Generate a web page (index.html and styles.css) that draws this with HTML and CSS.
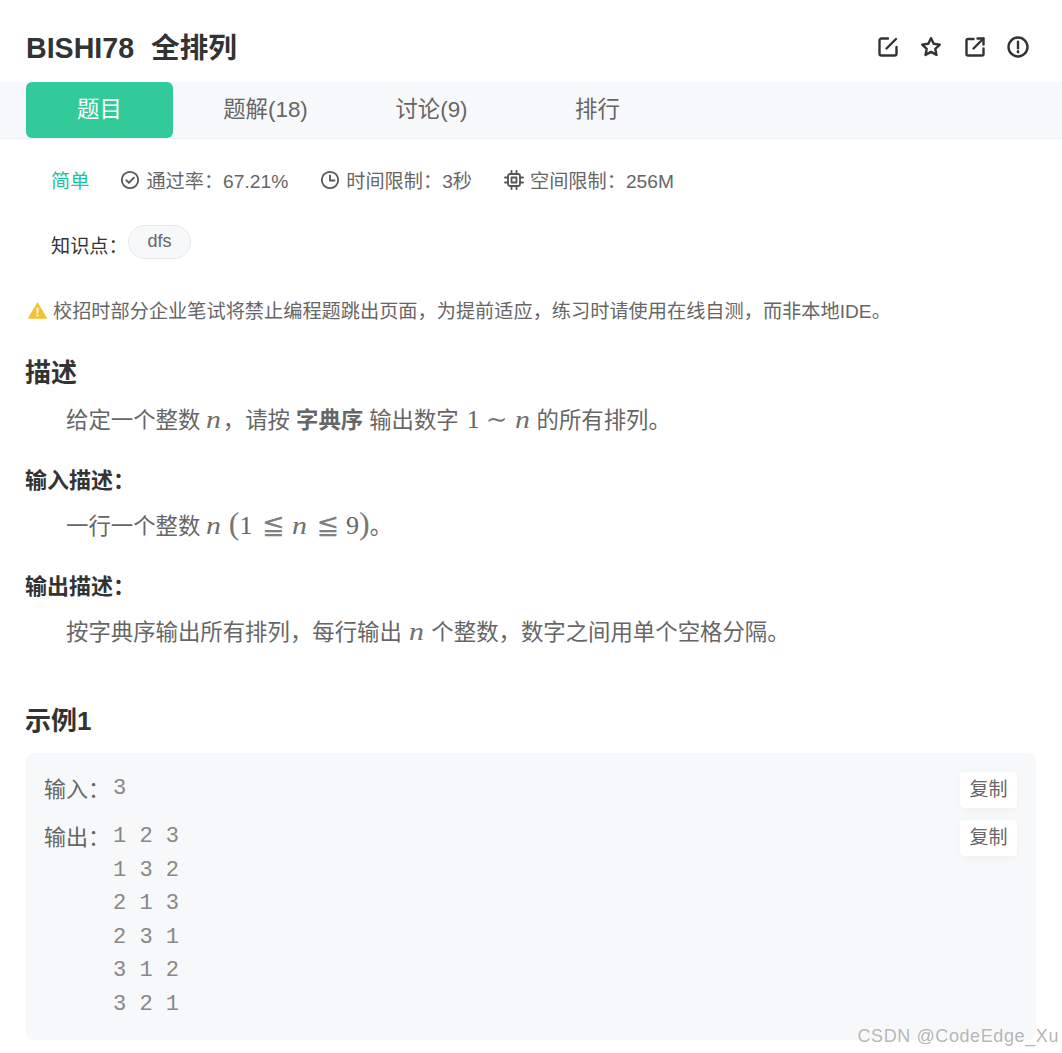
FILE: index.html
```html
<!DOCTYPE html>
<html lang="zh-CN">
<head>
<meta charset="utf-8">
<title>BISHI78 全排列</title>
<link rel="stylesheet" href="styles.css">
</head>
<body>
<div class="page">
  <header class="head">
    <h1 class="title"><span>BISHI78</span><span>全排列</span></h1>
    <div class="actions">
      <svg class="ico" viewBox="0 0 24 24"><path d="M12 3.500H5.500a2 2 0 0 0-2 2v13a2 2 0 0 0 2 2h13a2 2 0 0 0 2-2v-6.500"/><path d="M10.500 13.500 20 4"/></svg>
      <svg class="ico" viewBox="0 0 24 24"><path d="m12 3.200 2.700 5.600 6.100.8-4.500 4.200 1.200 6.100-5.500-3-5.500 3 1.200-6.100-4.500-4.200 6.100-.8z"/></svg>
      <svg class="ico" viewBox="0 0 24 24"><path d="M10.500 4H5A1.500 1.500 0 0 0 3.500 5.500v13.500A1.500 1.500 0 0 0 5 20.500h14a1.500 1.500 0 0 0 1.500-1.500v-5.500"/><path d="M10.500 13.500 20.500 3.500"/><path d="M14.500 3.500h6v6"/></svg>
      <svg class="ico" viewBox="0 0 24 24"><circle cx="12" cy="12" r="9.500"/><path d="M12 6.800v6.500"/><path d="M12 16.300v1"/></svg>
    </div>
  </header>

  <nav class="tabs">
    <a class="tab tab-active">题目</a>
    <a class="tab">题解(18)</a>
    <a class="tab">讨论(9)</a>
    <a class="tab">排行</a>
  </nav>

  <div class="meta">
    <span class="level">简单</span>
    <span class="meta-item">
      <svg class="mico" viewBox="0 0 20 20"><circle cx="10" cy="10" r="8.200"/><path d="m6.200 10.200 2.700 2.700 5-5.300"/></svg>通过率：67.21%</span>
    <span class="meta-item">
      <svg class="mico" viewBox="0 0 20 20"><circle cx="10" cy="10" r="8.200"/><path d="M10 5.500V10.500h4.500"/></svg>时间限制：3秒</span>
    <span class="meta-item">
      <svg class="mico" viewBox="0 0 20 20"><rect x="4" y="4" width="12" height="12" rx="2"/><rect x="7.500" y="7.500" width="5" height="5"/><path d="M7.500 1v3M12.500 1v3M7.500 16v3M12.500 16v3M1 7.500h3M1 12.500h3M16 7.500h3M16 12.500h3"/></svg>空间限制：256M</span>
  </div>

  <div class="tags">
    <span class="tags-label">知识点：</span>
    <span class="chip">dfs</span>
  </div>

  <div class="notice">
    <svg class="warn" viewBox="0 0 20 18"><path d="M10 .8 19.600 17.200H.4z" fill="#f2c230" stroke="#f2c230" stroke-width="1" stroke-linejoin="round"/><rect x="9" y="6" width="2" height="6" fill="#fff"/><rect x="9" y="13.200" width="2" height="2" fill="#fff"/></svg>
    <span>校招时部分企业笔试将禁止编程题跳出页面，为提前适应，练习时请使用在线自测，而非本地IDE。</span>
  </div>

  <section class="desc">
    <h2 class="h-main">描述</h2>
    <p class="para">给定一个整数<i class="mi mi-a">n</i>，请按<b class="strong">字典序</b>输出数字<span class="mn">1</span><span class="mrel">∼</span><i class="mi mi-b">n</i><span class="after">的所有排列。</span></p>
    <h3 class="h-sub">输入描述：</h3>
    <p class="para">一行一个整数<i class="mi mi-a">n</i><span class="mparen mparen-l">(</span><span class="mnum">1</span><span class="mrel2">≦</span><i class="mi">n</i><span class="mrel2">≦</span><span class="mnum">9</span><span class="mparen">)</span>。</p>
    <h3 class="h-sub">输出描述：</h3>
    <p class="para">按字典序输出所有排列，每行输出<i class="mi mi-c">n</i>个整数，数字之间用单个空格分隔。</p>
  </section>

  <section class="sample">
    <h2 class="h-main h-sample">示例1</h2>
    <div class="box">
      <div class="io io-in">
        <span class="io-label">输入：</span>
        <pre class="io-val">3</pre>
        <button class="copy">复制</button>
      </div>
      <div class="io">
        <span class="io-label">输出：</span>
        <pre class="io-val">1 2 3
1 3 2
2 1 3
2 3 1
3 1 2
3 2 1</pre>
        <button class="copy">复制</button>
      </div>
    </div>
  </section>
  <div class="mark">CSDN @CodeEdge_Xu</div>
</div>
</body>
</html>
```

FILE: styles.css
```css
* { box-sizing: border-box; }
html, body { margin: 0; padding: 0; background: #fff; }
body { font-family: "Liberation Sans", "Noto Sans CJK SC", sans-serif; color: #666; }
.page { position: relative; width: 1062px; height: 1053px; overflow: hidden; }

.head { height: 82px; padding: 11px 32px 0 26px; display: flex; align-items: center; justify-content: space-between; }
.title { margin: 0; padding-top: 3px; font-size: 28.600px; font-weight: 700; color: #333; display: flex; gap: 17px; line-height: 40px; }
.actions { display: flex; gap: 19.500px; }
.ico { width: 24px; height: 24px; fill: none; stroke: #333; stroke-width: 2.400; stroke-linecap: round; stroke-linejoin: round; }

.tabs { height: 57px; background: #f7f8fa; border-bottom: 1px solid #eff0f2; padding-left: 26px; display: flex; gap: 19px; }
.tab { width: 147px; height: 56px; padding-bottom: 6px; display: flex; align-items: center; justify-content: center; font-size: 22.400px; color: #666; }
.tab-active { background: #32ca99; color: #fff; border-radius: 6px; }

.meta { height: 34px; margin-top: 24px; padding-left: 51px; display: flex; align-items: center; font-size: 19.200px; }
.level { color: #1fc2a4; margin-right: 31px; }
.meta-item { display: flex; align-items: center; margin-right: 32px; }
.mico { width: 20px; height: 20px; margin-right: 6px; fill: none; stroke: #555; stroke-width: 1.800; stroke-linecap: round; stroke-linejoin: round; }

.tags { height: 34px; margin-top: 28px; padding-left: 51px; display: flex; align-items: center; }
.tags-label { font-size: 19.200px; color: #333; width: 77px; padding-top: 5px; }
.chip { height: 34px; width: 63px; border: 1px solid #e7e8ea; border-radius: 17px; background: #f7f8fa; font-size: 18px; display: flex; align-items: center; justify-content: center; padding-bottom: 1px; }

.notice { height: 30px; margin-top: 37px; padding: 0 0 2px 28px; display: flex; align-items: center; font-size: 19.200px; color: #666; }
.warn { width: 19px; height: 17px; margin-right: 6px; }

.desc { margin-top: 31px; padding: 0 25px; }
.h-main { margin: 0; font-size: 26px; font-weight: 700; color: #333; line-height: 32px; }
.h-sub { margin: 27px 0 0; font-size: 22px; font-weight: 700; color: #333; line-height: 30px; }
.para { margin: 13px 0 0; padding-left: 41px; height: 36px; font-size: 22.400px; line-height: 36px; color: #666; white-space: nowrap; }
.h-main + .para { margin-top: 14px; }
.mi { font-family: "Liberation Serif", serif; font-style: italic; font-size: 26px; display: inline-block; width: 15.500px; line-height: 0; text-align: left; color: #707070; transform: scaleX(1.150); transform-origin: left center; }
.mi-a { margin: 0 0 0 6px; width: 16.500px; }
.mi-b { margin-left: 7.500px; }
.mi-c { margin: 0 7px; }
.strong { font-weight: 700; margin: 0 6px; }
.mn, .mnum { font-family: "Liberation Serif", serif; font-size: 26px; line-height: 0; }
.mn { margin-left: 8px; }
.mrel { font-family: "DejaVu Serif", serif; font-size: 26px; margin: 0 0 0 6px; line-height: 0; color: #777; }
.after { margin-left: 6px; }
.mparen { font-family: "Liberation Serif", serif; font-size: 32px; font-weight: 400; line-height: 0; color: #777; }
.mparen-l { margin-left: 6px; }
.mrel2 { font-family: "DejaVu Sans", sans-serif; font-size: 27px; display: inline-block; width: 20px; margin: 0 9.500px; text-align: center; line-height: 0; color: #808080; }

.sample { margin-top: 54px; padding: 0 26px; }
.h-sample { margin: 0 0 0 -1px; }
.box { margin-top: 16px; height: 287px; background: #f7f8fa; border-radius: 8px; padding: 19px 19px 0 19px; }
.io { display: flex; align-items: flex-start; position: relative; }
.io-in { height: 48px; }
.io-label { font-size: 22px; line-height: 36px; width: 68px; margin-left: -1px; margin-right: 1px; color: #666; }
.io-val { margin: 0; font-family: "Liberation Mono", monospace; font-size: 22px; line-height: 33.600px; letter-spacing: 0; color: #888; flex: 1; }
.copy { width: 57px; height: 36px; border: 0; padding: 0 0 5px; background: #fff; border-radius: 4px; box-shadow: 0 2px 8px rgba(0, 0, 0, .04); font: 19px "Liberation Sans", "Noto Sans CJK SC", sans-serif; color: #666; }

.mark { position: absolute; right: 3px; bottom: 5px; font-size: 18px; line-height: 24px; letter-spacing: .600px; color: rgba(140, 140, 140, .65); text-shadow: 0 0 2px #fff; }
```
